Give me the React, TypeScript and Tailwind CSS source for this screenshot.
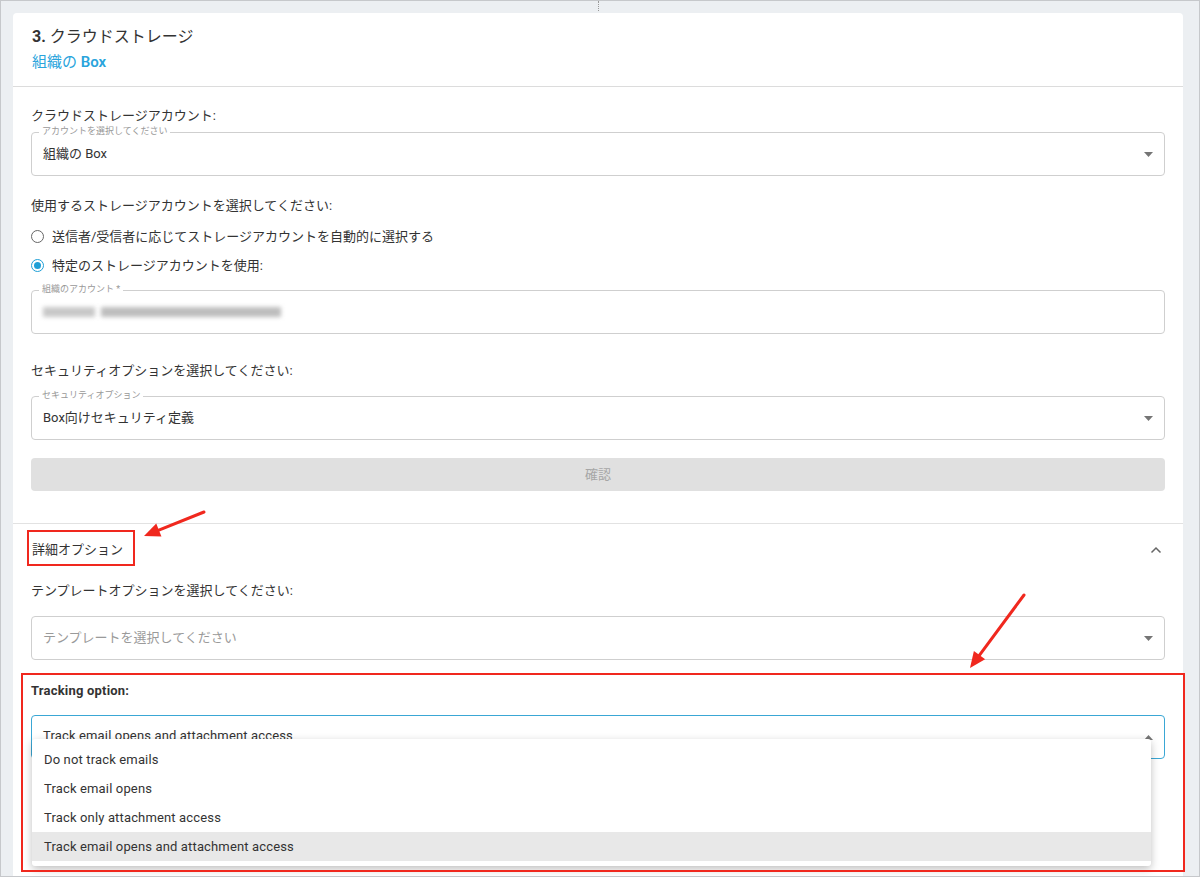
import React from "react";

const font = { fontFamily: "Roboto, 'Noto Sans CJK JP', sans-serif" };

const Caret = ({ up = false }: { up?: boolean }) => (
  <svg width="9" height="5" viewBox="0 0 9 5" className="text-[#757575]">
    {up ? <path d="M0 5 L4.5 0 L9 5 Z" fill="currentColor" /> : <path d="M0 0 L4.5 5 L9 0 Z" fill="currentColor" />}
  </svg>
);

interface OutlinedProps {
  label?: string;
  children?: React.ReactNode;
  caret?: boolean;
  focused?: boolean;
}

const Outlined: React.FC<OutlinedProps> = ({ label, children, caret = true, focused = false }) => (
  <div className="relative">
    <div
      className={`flex items-center h-[44px] rounded-[4px] border pl-[11px] pr-[11px] ${
        focused ? "border-[#3aa7d5]" : "border-[#cfcfcf]"
      }`}
    >
      <div className="flex-1 text-[13px] text-[#333]">{children}</div>
      {caret && <Caret up={focused} />}
    </div>
    {label && (
      <span className="absolute left-[8px] -top-[6px] bg-white px-[3px] text-[9px] leading-[11px] text-[#999]">
        {label}
      </span>
    )}
  </div>
);

const Radio = ({ checked, label }: { checked?: boolean; label: string }) => (
  <div className="flex items-center gap-[8px] h-[29px]">
    <span
      className={`flex items-center justify-center w-[13px] h-[13px] rounded-full border ${
        checked ? "border-[#1f9fd6]" : "border-[#666]"
      }`}
    >
      {checked && <span className="w-[7px] h-[7px] rounded-full bg-[#1f9fd6]" />}
    </span>
    <span className="text-[13px] text-[#333]">{label}</span>
  </div>
);

const Arrow = ({ x1, y1, x2, y2 }: { x1: number; y1: number; x2: number; y2: number }) => {
  const ang = Math.atan2(y2 - y1, x2 - x1);
  const len = 16;
  const w = 7;
  const bx = x2 - len * Math.cos(ang);
  const by = y2 - len * Math.sin(ang);
  const px = -Math.sin(ang) * w;
  const py = Math.cos(ang) * w;
  return (
    <svg className="absolute left-0 top-0 pointer-events-none z-30" width="1200" height="877">
      <line x1={x1} y1={y1} x2={bx} y2={by} stroke="#f0281e" strokeWidth="3" strokeLinecap="round" />
      <polygon points={`${x2},${y2} ${bx + px},${by + py} ${bx - px},${by - py}`} fill="#f0281e" />
    </svg>
  );
};

const options = [
  "Do not track emails",
  "Track email opens",
  "Track only attachment access",
  "Track email opens and attachment access",
];

export default function App() {
  return (
    <div
      className="relative w-[1200px] h-[877px] overflow-hidden bg-[#eceff2] border border-[#c6c8cb] pl-[12px] pr-[16px] pt-[12px]"
      style={font}
    >
      {/* top handle */}
      <div className="absolute left-[597px] top-0 h-[10px] border-l border-dotted border-[#999]" />

      <div className="bg-white rounded-[4px] h-[900px]">
        <div className="px-[19px] pt-[13px] pb-[14px] border-b border-[#dcdcdc]">
          <div className="text-[16px] leading-[22px] text-[#333]">
            <span className="font-bold">3.</span> クラウドストレージ
          </div>
          <div className="mt-[4px] text-[15px] leading-[20px] text-[#2aa4dc]">
            組織の <span className="font-semibold">Box</span>
          </div>
        </div>

        <div className="px-[18px] pt-[20px] pb-[32px] border-b border-[#e2e2e2]">
          <div className="text-[13px] text-[#333] leading-[18px]">クラウドストレージアカウント:</div>
          <div className="mt-[7px]">
            <Outlined label="アカウントを選択してください">組織の Box</Outlined>
          </div>
          <div className="mt-[21px] text-[13px] text-[#333] leading-[18px]">
            使用するストレージアカウントを選択してください:
          </div>
          <div className="mt-[7px]">
            <Radio label="送信者/受信者に応じてストレージアカウントを自動的に選択する" />
            <Radio checked label="特定のストレージアカウントを使用:" />
          </div>
          <div className="mt-[10px]">
            <Outlined label="組織のアカウント *" caret={false}>
              <div className="flex gap-[6px] items-center">
                <span className="block w-[52px] h-[10px] bg-[#c8c8c8] blur-[2px]" />
                <span className="block w-[180px] h-[10px] bg-[#bdbdbd] blur-[2px]" />
              </div>
            </Outlined>
          </div>
          <div className="mt-[28px] text-[13px] text-[#333] leading-[18px]">
            セキュリティオプションを選択してください:
          </div>
          <div className="mt-[16px]">
            <Outlined label="セキュリティオプション">Box向けセキュリティ定義</Outlined>
          </div>
          <div className="mt-[18px] h-[33px] rounded-[4px] bg-[#e0e0e0] flex items-center justify-center text-[13px] text-[#a6a6a6]">
            確認
          </div>
        </div>

        <div className="px-[18px] pt-[16px]">
          <div className="flex items-center justify-between h-[20px] pl-[1px]">
            <span className="text-[13px] text-[#333]">詳細オプション</span>
            <svg width="12" height="8" viewBox="0 0 12 8" className="mr-[3px]">
              <path d="M1.5 6.5 L6 2 L10.5 6.5" fill="none" stroke="#666" strokeWidth="1.5" />
            </svg>
          </div>
          <div className="mt-[22px] text-[13px] text-[#333] leading-[18px]">
            テンプレートオプションを選択してください:
          </div>
          <div className="mt-[16px]">
            <Outlined>
              <span className="text-[#9a9a9a]">テンプレートを選択してください</span>
            </Outlined>
          </div>
          <div className="mt-[22px] text-[13px] font-bold text-[#333] leading-[18px] tracking-[0.2px]">Tracking option:</div>
          <div className="relative mt-[15px]">
            <Outlined focused>
              <span className="relative top-[-1px] tracking-[0.15px]">Track email opens and attachment access</span>
            </Outlined>
            <div className="absolute left-[1px] right-[14px] top-[24px] bg-white rounded-[3px] shadow-[0_3px_8px_rgba(0,0,0,0.25)] pt-[6px] pb-[5px] z-10">
              {options.map((o, i) => (
                <div
                  key={o}
                  className={`h-[29px] flex items-center pl-[12px] text-[13px] text-[#333] tracking-[0.15px] ${
                    i === 3 ? "bg-[#e8e8e8]" : ""
                  }`}
                >
                  {o}
                </div>
              ))}
            </div>
          </div>
        </div>
      </div>

      {/* annotations */}
      <div className="absolute left-[26px] top-[529px] w-[108px] h-[36px] border-2 border-[#f0281e] pointer-events-none" />
      <div className="absolute left-[20px] top-[672px] w-[1164px] h-[199px] border-2 border-[#f0281e] pointer-events-none z-20" />
      <Arrow x1={203} y1={511} x2={143} y2={535} />
      <Arrow x1={1023} y1={594} x2={969} y2={667} />
    </div>
  );
}
